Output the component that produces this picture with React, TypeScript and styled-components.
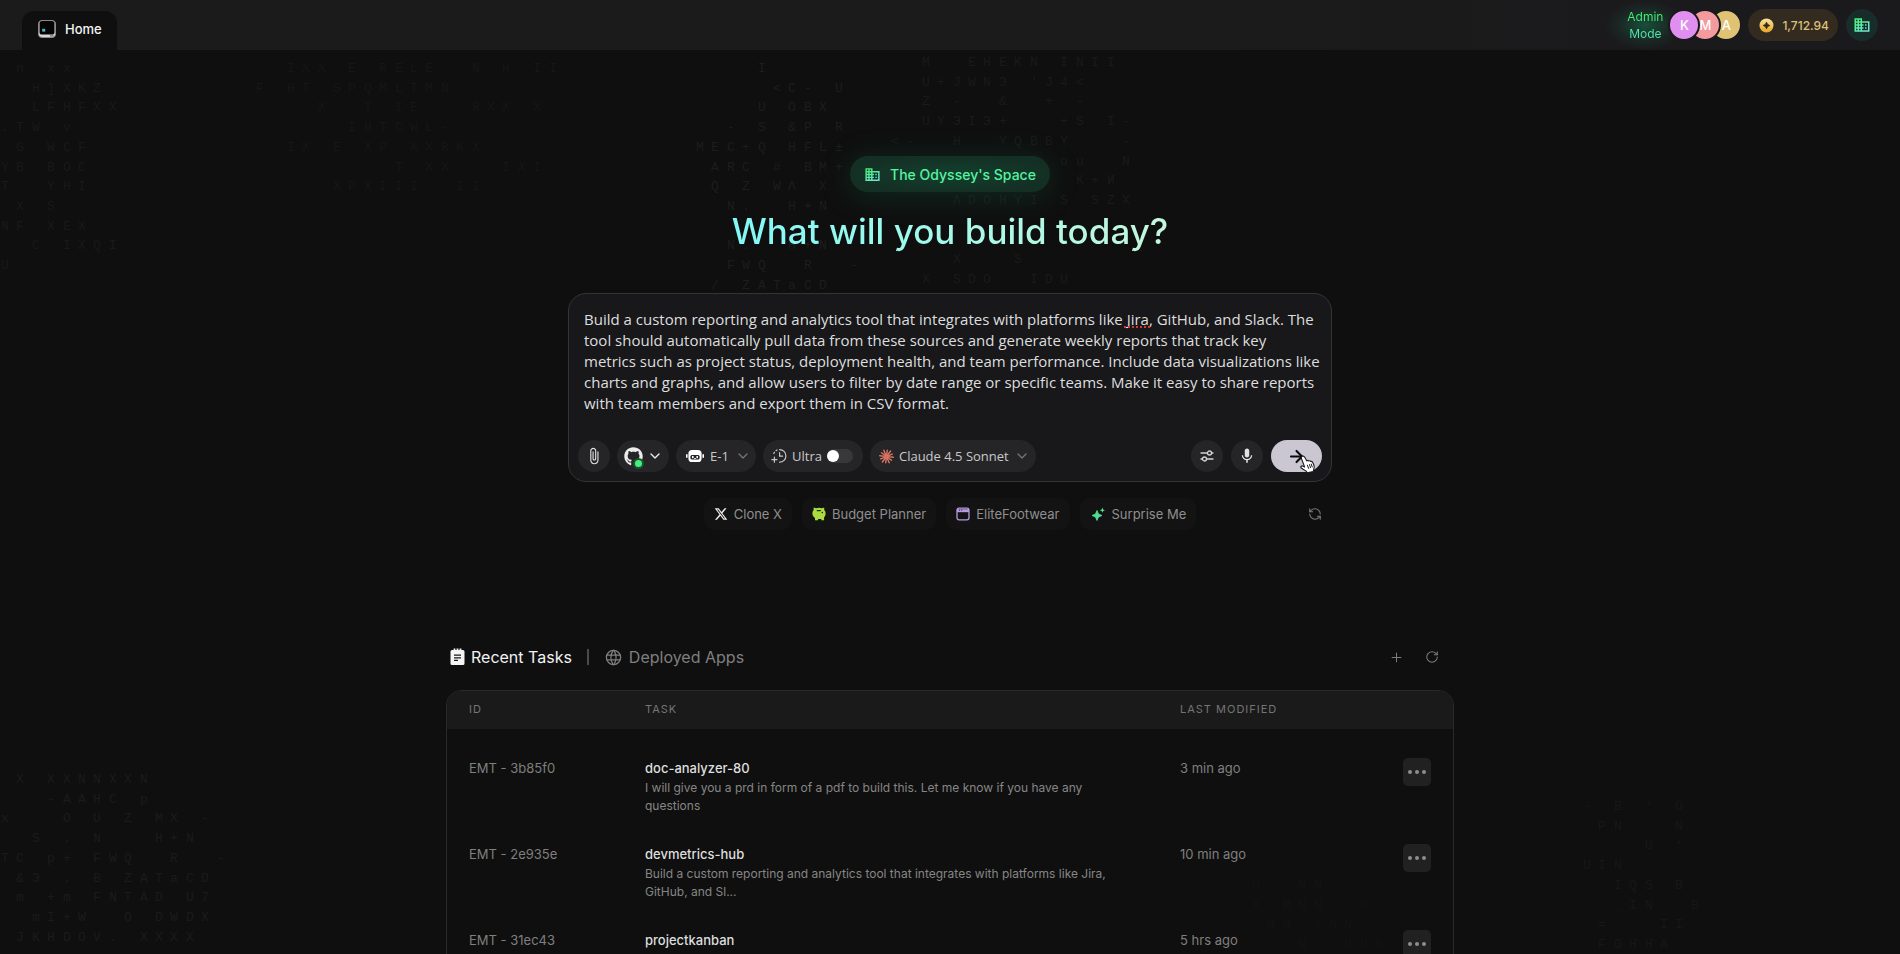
import React, { useId, useState } from 'react';
import styled, { createGlobalStyle, css } from 'styled-components';
import { ArrowRight, ChevronDown, Plus, RefreshCcw, RotateCw } from 'lucide-react';
import { FaGithub, FaXTwitter } from 'react-icons/fa6';
import { MdMic, MdAttachFile } from 'react-icons/md';
import { TbWorld } from 'react-icons/tb';

const sans = `Inter, 'Liberation Sans', sans-serif`;
const humanist = `'Open Sans', 'Liberation Sans', sans-serif`;

const GlobalStyle = createGlobalStyle`
  *, *::before, *::after { box-sizing: border-box; }
  body { margin: 0; background: #0f0f0f; color: #e4e4e4; font-family: ${sans}; }
  button, select, textarea, input { font: inherit; color: inherit; margin: 0; }
  button { cursor: pointer; }
  svg { display: block; flex: none; }
`;

/* ---------- page frame ---------- */

const Page = styled.div`
  position: relative;
  display: flex;
  flex-direction: column;
  height: 100vh;
  overflow: hidden;
  background: #0f0f0f;
`;

const Header = styled.header`
  position: relative;
  z-index: 1;
  display: flex;
  flex: none;
  align-items: flex-end;
  justify-content: space-between;
  height: 50px;
  padding: 0 22px;
  background: linear-gradient(90deg, #1b1b1b 60%, #1a191c);
`;

const HomeTab = styled.a`
  display: flex;
  align-items: center;
  gap: 9px;
  height: 39px;
  padding: 0 15px 4px 16px;
  border-radius: 12px 12px 0 0;
  background: #0f0f0f;
  color: #f4f4f4;
  font-size: 13px;
  font-weight: 500;
  text-decoration: none;
`;

const Account = styled.div`
  display: flex;
  align-items: center;
  gap: 8px;
  height: 50px;
`;

const AdminMode = styled.div`
  width: 44px;
  font-size: 12px;
  line-height: 17px;
  text-align: center;
  color: transparent;
  background: linear-gradient(#46ee6e 25%, #54e8b0 80%);
  background-clip: text;
`;

const AdminGlow = styled.div`
  margin-right: -25px;
  padding: 8px 18px;
  background: radial-gradient(ellipse closest-side, rgba(20, 200, 130, 0.3), rgba(20, 200, 130, 0.08) 65%, rgba(20, 200, 130, 0));
`;

const Avatars = styled.ul`
  position: relative;
  display: flex;
  margin: 0 -2px 0 0;
  padding: 0;
  list-style: none;
`;

const Avatar = styled.li<{ $tone: string; $order: number }>`
  position: relative;
  z-index: ${(p) => p.$order};
  display: flex;
  align-items: center;
  justify-content: center;
  width: 32px;
  height: 32px;
  border: 2px solid #1a191c;
  border-radius: 50%;
  background: ${(p) => p.$tone};
  color: #fff;
  font-size: 13px;
  font-weight: 500;
  & + & {
    margin-left: -11px;
  }
`;

const Credits = styled.button`
  display: flex;
  align-items: center;
  gap: 8px;
  height: 32px;
  padding: 0 9px 0 11px;
  border: 0;
  border-radius: 16px;
  background: #342b20;
  color: #dcc079;
  font-size: 12px;
  font-weight: 500;
`;

const SpaceButton = styled.button`
  display: flex;
  align-items: center;
  justify-content: center;
  width: 32px;
  height: 32px;
  padding: 0;
  border: 0;
  border-radius: 50%;
  background: #182d29;
`;

const Main = styled.main`
  position: relative;
  z-index: 1;
  display: flex;
  flex: 1;
  flex-direction: column;
  align-items: center;
  min-height: 0;
  overflow-y: auto;
  scrollbar-width: none;
`;

/* ---------- hero ---------- */

const Hero = styled.section`
  display: flex;
  flex: none;
  flex-direction: column;
  align-items: center;
  width: 100%;
  max-width: 764px;
  padding-top: 106px;
`;

const SpaceBadge = styled.div`
  display: flex;
  align-items: center;
  gap: 9px;
  height: 36px;
  padding: 0 14px;
  border-radius: 18px;
  background: radial-gradient(ellipse at center, #12402e, #143024 70%);
  box-shadow: 0 4px 32px rgba(20, 140, 90, 0.22);
  font-size: 14px;
  font-weight: 500;
  color: #55f4a0;
`;

const Title = styled.h1`
  margin: 17px 0 0;
  font-size: 35px;
  font-weight: 500;
  line-height: 44px;
  color: transparent;
  background: linear-gradient(90deg, #82f8f6, #a6f9ea 50%, #c4f7dc);
  background-clip: text;
`;

const Prompt = styled.form`
  width: 100%;
  margin-top: 40px;
  padding: 15px 5px 9px 9px;
  border: 1px solid #343436;
  border-radius: 18px;
  background: #18181a;
`;

const PromptText = styled.div`
  position: relative;
  padding-left: 6px;
`;

const PromptInput = styled.textarea`
  display: block;
  width: 100%;
  padding: 0;
  border: 0;
  outline: 0;
  resize: none;
  overflow: hidden;
  background: none;
  color: #dededf;
  font-family: ${humanist};
  font-size: 15px;
  line-height: 21px;
`;

const SpellingMark = styled.span`
  position: absolute;
  top: 17px;
  left: 546px;
  width: 26px;
  border-bottom: 2px dotted #d8353c;
`;

const Toolbar = styled.div`
  display: flex;
  align-items: center;
  gap: 7px;
  margin-top: 26px;
  padding-right: 4px;
`;

const pill = css`
  display: flex;
  align-items: center;
  height: 32px;
  border: 0;
  border-radius: 16px;
  background: #252527;
  color: #c9c9cb;
  font-family: ${humanist};
  font-size: 13px;
`;

const RoundButton = styled.button`
  ${pill}
  justify-content: center;
  width: 32px;
  padding: 0;
  color: #e2e2e4;
`;

const RepoButton = styled.button`
  ${pill}
  gap: 4px;
  padding: 0 6px 0 7px;
  color: #ececec;
`;

const RepoMark = styled.span`
  position: relative;
`;

const OnlineDot = styled.span`
  position: absolute;
  right: -1px;
  bottom: -3px;
  width: 11px;
  height: 11px;
  border: 2px solid #1b5131;
  border-radius: 50%;
  background: #45f07c;
`;

const PillLabel = styled.label<{ $gap: number; $start: number; $end: number }>`
  ${pill}
  gap: ${(p) => p.$gap}px;
  padding: 0 ${(p) => p.$end}px 0 ${(p) => p.$start}px;
  & > svg:last-child {
    color: #77777a;
  }
`;

const BareSelect = styled.select`
  padding: 0;
  border: 0;
  outline: 0;
  appearance: none;
  background: none;
`;

const Switch = styled.input`
  appearance: none;
  display: flex;
  align-items: center;
  width: 26px;
  height: 14px;
  border-radius: 7px;
  background: #38383a;
  &::before {
    content: '';
    width: 12px;
    height: 12px;
    border-radius: 50%;
    background: #fff;
  }
  &:checked {
    justify-content: flex-end;
    background: #2f8f57;
  }
`;

const ToolbarEnd = styled.div`
  display: flex;
  gap: 8px;
  margin-left: auto;
`;

const SendButton = styled.button`
  ${pill}
  position: relative;
  justify-content: center;
  width: 51px;
  padding: 0;
  background: #cac7d2;
  color: #0a0a0c;
`;

const Pointer = styled.svg`
  position: absolute;
  top: 15px;
  left: 28px;
`;

const Suggestions = styled.div`
  display: grid;
  grid-template-columns: 1fr auto 1fr;
  align-items: center;
  width: 100%;
  margin-top: 16px;
`;

const Chips = styled.div`
  display: flex;
  grid-column: 2;
  gap: 10px;
`;

const Chip = styled.button`
  display: flex;
  align-items: center;
  gap: 6px;
  height: 32px;
  padding: 0 10px;
  border: 0;
  border-radius: 10px;
  background: #131313;
  color: #8f8f8f;
  font-size: 13px;
`;

const GhostButton = styled.button`
  display: flex;
  align-items: center;
  justify-content: center;
  width: 30px;
  height: 30px;
  padding: 0;
  border: 0;
  background: none;
  color: #7c7c7c;
`;

const Shuffle = styled(GhostButton)`
  justify-self: end;
  margin-right: 2px;
`;

/* ---------- tasks ---------- */

const Tasks = styled.section`
  flex: none;
  width: 100%;
  max-width: 1008px;
  margin-top: 111px;
`;

const TasksBar = styled.div`
  display: flex;
  align-items: center;
  justify-content: space-between;
  height: 32px;
  padding: 0 7px 0 4px;
`;

const Tabs = styled.div`
  display: flex;
  align-items: center;
  gap: 15px;
`;

const Tab = styled.button`
  display: flex;
  align-items: center;
  gap: 6px;
  padding: 0;
  border: 0;
  background: none;
  color: #7f7f80;
  font-size: 16px;
  line-height: 20px;
  &[aria-selected='true'] {
    color: #f2f2f2;
  }
`;

const TabDivider = styled.span`
  width: 2px;
  height: 16px;
  background: #4a4a4a;
`;

const TasksActions = styled.div`
  display: flex;
  gap: 6px;
`;

const TableFrame = styled.div`
  margin-top: 17px;
  border: 1px solid #292929;
  border-radius: 15px;
  overflow: hidden;
`;

const Table = styled.table`
  width: 100%;
  border-collapse: collapse;
  table-layout: fixed;
  tbody::before {
    content: '';
    display: block;
    height: 15px;
  }
`;

const HeadCell = styled.th`
  height: 38px;
  padding: 0 0 2px;
  background: #1a1a1a;
  color: #757575;
  font-size: 11px;
  font-weight: 400;
  letter-spacing: 1px;
  text-align: left;
  &:first-child {
    padding-left: 22px;
  }
`;

const Row = styled.tr`
  height: 86px;
`;

const Cell = styled.td`
  padding: 14px 0 0;
  vertical-align: top;
  color: #7f7f7f;
  font-size: 13px;
  line-height: 20px;
  &:first-child {
    padding-left: 22px;
  }
`;

const TaskName = styled.div`
  color: #dedede;
  font-weight: 500;
`;

const TaskSummary = styled.p`
  max-width: 464px;
  margin: 1px 0 0;
  color: #868686;
  font-size: 12px;
  line-height: 18px;
`;

const MoreButton = styled.button`
  display: flex;
  align-items: center;
  justify-content: center;
  width: 28px;
  height: 28px;
  margin-left: auto;
  margin-right: 22px;
  padding: 0;
  border: 0;
  border-radius: 5px;
  background: #212121;
  color: #8d8d8d;
`;

/* ---------- glyph backdrop ---------- */

const Backdrop = styled.svg`
  position: absolute;
  inset: 0;
  width: 100%;
  height: 100%;
  font-family: 'Liberation Mono', monospace;
  font-size: 13px;
  text-anchor: middle;
`;

type Field = { x: number; y: number; fill: string; rows: string[] };

const fields: Field[] = [
  {
    x: 5, y: 72, fill: '#191919',
    rows: [' n xx', '  H]XKZ', '  LFHFXX', '.TW v', ' G WCF', 'YB BOC', 'T  YHI', ' X S', 'NF XEX', '  C IXQI', 'U'],
  },
  {
    x: 260, y: 72, fill: '#161616',
    rows: ['  IXX E RELE  N H II', 'F HT SPQMLTMN', '    X  T IE   RXX X', '      IHTCWL-', '  IX E XP XXRKX', '         T XX   IXI', '     XPXIII  II'],
  },
  {
    x: 700, y: 72, fill: '#1d1d1d',
    rows: ['    I', '     <C- U', '    U OBX', '  - S &P R', 'MEC+Q HFL±', ' ARC # BM+', ' Q Z WΛ X', '  N.  H+N', '', '  N.  H+N', '  FWQ  R  -', ' / ZATaCD'],
  },
  {
    x: 895, y: 66, fill: '#1a1a1a',
    rows: ['  M  EHEKN INII', "  U+JWNЭ 'J4<", '  Z -  &  + -', '  UYЭIЭ+   +S I-', '<-  H  YQBBY   -', '           ou  N', '            K+И', '    ΛDOHYI S SZX', '', '', '    X   S', '  X SDO  IDU'],
  },
  {
    x: 5, y: 783, fill: '#1b1b1b',
    rows: [' X XXNNXXN', '   -AAHC p', 'x   O U Z MX -', '  S . N   H+N', 'TC p+ FWQ  R  -', ' &Э . B ZATaCD', ' m +m FNTAD U7', '  mI+W  O DWDX', ' JKHDOV. XXXX'],
  },
  {
    x: 1587, y: 810, fill: '#171717',
    rows: ["- B ' O", ' PN   N', '    U *', 'UIN', '  IQS B', '  _IN  B', ' =   II', ' FGHHA'],
  },
  { x: 1256, y: 889, fill: '#131313', rows: ['N  NN', 'X MNN  N', ' NN XNN', '   N  NNX'] },
];

const GlyphBackdrop = () => (
  <Backdrop aria-hidden="true">
    {fields.map((f) =>
      f.rows.map((row, r) => (
        <g key={`${f.x}-${r}`} fill={f.fill}>
          {[...row].map((ch, c) =>
            ch === ' ' ? null : (
              <text key={c} x={Math.round(f.x + c * 15.4)} y={Math.round(f.y + r * 19.7)}>
                {ch}
              </text>
            ),
          )}
        </g>
      )),
    )}
  </Backdrop>
);

/* ---------- icons ---------- */

const BuildingIcon = ({ size = 18 }: { size?: number }) => {
  const id = useId();
  return (
    <svg width={size} height={size} viewBox="0 0 24 24" aria-hidden="true">
      <defs>
        <linearGradient id={id} x1="0" y1="0" x2="0.7" y2="1">
          <stop offset="0" stopColor="#3ff06c" />
          <stop offset="1" stopColor="#6fe8d2" />
        </linearGradient>
      </defs>
      <path
        fill={`url(#${id})`}
        d="M12 7V3H2v18h20V7H12zM6 19H4v-2h2v2zm0-4H4v-2h2v2zm0-4H4V9h2v2zm0-4H4V5h2v2zm4 12H8v-2h2v2zm0-4H8v-2h2v2zm0-4H8V9h2v2zm0-4H8V5h2v2zm10 12h-8v-2h2v-2h-2v-2h2v-2h-2V9h8v10zm-2-8h-2v2h2v-2zm0 4h-2v2h2v-2z"
      />
    </svg>
  );
};

const AppMark = () => (
  <svg width="18" height="18" viewBox="0 0 18 18" aria-hidden="true">
    <rect x="0.5" y="0.5" width="17" height="17" rx="3.5" fill="#d8d8d8" stroke="#8a8a8a" />
    <rect x="1.5" y="1" width="15" height="13.6" rx="2.6" fill="#050505" />
    <rect x="4.2" y="8.8" width="3" height="2.8" fill="#4fb6c4" />
    <rect x="12" y="15.4" width="3.4" height="1" fill="#555" />
  </svg>
);

const CoinIcon = () => (
  <svg width="15" height="15" viewBox="0 0 15 15" aria-hidden="true">
    <defs>
      <linearGradient id="coin" x1="0" y1="0" x2="0" y2="1">
        <stop offset="0" stopColor="#f7e3a4" />
        <stop offset="1" stopColor="#e6a622" />
      </linearGradient>
    </defs>
    <circle cx="7.5" cy="7.5" r="7" fill="url(#coin)" />
    <path d="M7.5 4.2 8.6 6.4 10.8 7.5 8.6 8.6 7.5 10.8 6.4 8.6 4.2 7.5 6.4 6.4Z" fill="#33270c" stroke="#33270c" strokeWidth="0.8" />
  </svg>
);

const RobotIcon = () => (
  <svg width="18" height="14" viewBox="0 0 18 14" aria-hidden="true" fill="#fff">
    <rect x="0" y="5" width="1.6" height="4" rx="0.8" />
    <rect x="16.4" y="5" width="1.6" height="4" rx="0.8" />
    <rect x="2.4" y="1" width="13.2" height="12" rx="3.6" />
    <rect x="4.4" y="6" width="9.2" height="4.6" rx="1.6" fill="#252527" />
    <rect x="6" y="7" width="1.6" height="2.2" />
    <rect x="10.4" y="7" width="1.6" height="2.2" />
    <rect x="8.2" y="9" width="1.6" height="1" />
  </svg>
);

const UltraIcon = () => (
  <svg width="16" height="16" viewBox="0 0 16 16" aria-hidden="true" fill="none" stroke="#c6c6c8" strokeWidth="1.2" strokeLinecap="round">
    <path d="M8.6 1.6a6.2 6.2 0 0 1 0 12.6" />
    <path d="M2.8 5.4a6.2 6.2 0 0 1 4-3.6" strokeDasharray="1.2 2.2" />
    <path d="M8.6 4.6v3.6h3" />
    <path d="M3.4 9v5.2M0.8 11.6H6" />
  </svg>
);

const BurstIcon = () => (
  <svg width="15" height="15" viewBox="0 0 16 16" aria-hidden="true" stroke="#d97562" strokeWidth="1.5" strokeLinecap="round">
    {Array.from({ length: 12 }, (_, i) => {
      const a = (i * Math.PI) / 6 + 0.12;
      const r = i % 2 ? 6.7 : 7.3;
      return <line key={i} x1={8 + Math.cos(a)} y1={8 + Math.sin(a)} x2={8 + r * Math.cos(a)} y2={8 + r * Math.sin(a)} />;
    })}
  </svg>
);

const TuneIcon = () => (
  <svg width="14" height="14" viewBox="0 0 14 14" aria-hidden="true" fill="none" stroke="#d2d2d4" strokeWidth="1.3" strokeLinecap="round">
    <path d="M1 4h6.4M11.6 4H13M1 10h1.4M6.6 10H13" />
    <circle cx="9.5" cy="4" r="2" />
    <circle cx="4.5" cy="10" r="2" />
  </svg>
);

const HandPointer = () => (
  <Pointer width="17" height="19" viewBox="0 0 17 19" aria-hidden="true">
    <path
      d="M3.3 1.3c.9-.5 1.8-.1 2.3.8l2.1 3.7c.6-.5 1.5-.4 2 .2.7-.4 1.5-.2 2 .5.8-.3 1.5 0 1.9.7l1.2 2.5c.8 1.8.6 3.1-.1 4.7l-.4 2.2-6.2 1.1-1-1.6-4.5-2.9c-.9-.6-1-1.3-.6-1.8.5-.6 1.3-.7 2.2-.2l1.4.7L2.5 3.7c-.5-.9-.1-1.9.8-2.4Z"
      fill="#fff"
      stroke="#1a1a1a"
      strokeWidth="1.1"
      strokeLinejoin="round"
    />
    <path d="M8.4 10.2l1.2 3.2M10.5 9.6l1 3M12.3 9.1l.9 2.9" stroke="#1a1a1a" strokeWidth="1" strokeLinecap="round" />
  </Pointer>
);

const PigIcon = () => (
  <svg width="14" height="14" viewBox="0 0 14 14" aria-hidden="true">
    <path
      d="M1.4.8C2.7.4 3.5.8 4 1.3c1.9-.7 4.2-.7 6 0 .6-.6 1.5-.8 2.400-.4l-.3 1.900c.9.9 1.400 2 1.500 3.200.1 1.700-.4 3.200-1.500 4.300v2.900H9.300v-1.300H6.100v1.300H3V10.900C1.300 9.900.4 8.400.4 6.500c0-1.500.5-2.800 1.400-3.700Z"
      fill="#a9dc3f"
    />
    <rect x="4.6" y="2.9" width="4.4" height="1.3" rx="0.6" fill="#1d2a08" />
    <circle cx="10.3" cy="5.6" r="0.8" fill="#1d2a08" />
  </svg>
);

const WindowIcon = () => (
  <svg width="14" height="14" viewBox="0 0 14 14" aria-hidden="true" fill="none" stroke="#b59be0">
    <rect x="1" y="1.2" width="12" height="11.6" rx="2" strokeWidth="1.3" />
    <path d="M1 2.2h12v3H1z" fill="#b59be0" stroke="none" />
    <path d="M3 3.2h1M5.2 3.2h1" stroke="#3a2a5a" strokeWidth="1" />
  </svg>
);

const SparkIcon = () => (
  <svg width="16" height="14" viewBox="0 0 16 14" aria-hidden="true">
    <defs>
      <linearGradient id="spark" x1="0" y1="0" x2="1" y2="1">
        <stop offset="0" stopColor="#3fe874" />
        <stop offset="1" stopColor="#64d0b4" />
      </linearGradient>
    </defs>
    <path d="M7 3.5 8.5 7 12 8.5 8.5 10 7 13.5 5.5 10 2 8.5 5.5 7Z" fill="url(#spark)" stroke="url(#spark)" strokeWidth="0.8" strokeLinejoin="round" />
    <path d="M12.4.6 13.1 2.5 15 3.2 13.1 3.9 12.4 5.8 11.7 3.9 9.8 3.2 11.7 2.5Z" fill="#4be886" />
  </svg>
);

const ClipboardIcon = () => (
  <svg width="15" height="18" viewBox="0 0 15 18" aria-hidden="true">
    <path d="M2 2h1.6V.6h1.8V2h1.2V.6h1.8V2h1.2V.6h1.8V2H13a1.5 1.5 0 0 1 1.5 1.5v12A1.5 1.5 0 0 1 13 17H2a1.5 1.5 0 0 1-1.5-1.5v-12A1.5 1.5 0 0 1 2 2Z" fill="#f4f4f4" />
    <path d="M4 7.2h7M4 9.8h7M4 12.4h4" stroke="#151515" strokeWidth="1.3" />
  </svg>
);

const MoreIcon = () => (
  <svg width="18" height="4" viewBox="0 0 18 4" aria-hidden="true" fill="currentColor">
    <circle cx="2" cy="2" r="2" />
    <circle cx="9" cy="2" r="2" />
    <circle cx="16" cy="2" r="2" />
  </svg>
);

/* ---------- data ---------- */

const promptText = [
  'Build a custom reporting and analytics tool that integrates with platforms like Jira, GitHub, and Slack. The tool should automatically pull data from these sources and generate weekly reports that track key',
  'metrics such as project status, deployment health, and team performance. Include data visualizations like charts and graphs, and allow users to filter by date range or specific teams. Make it easy to share reports with team members and export them in CSV format.',
].join('\n');

const people = [
  { initial: 'K', tone: '#e08ff0' },
  { initial: 'M', tone: '#f29a9e' },
  { initial: 'A', tone: '#dfc274' },
];

const chips = [
  { label: 'Clone X', icon: <FaXTwitter size={14} color="#f0f0f0" /> },
  { label: 'Budget Planner', icon: <PigIcon /> },
  { label: 'EliteFootwear', icon: <WindowIcon /> },
  { label: 'Surprise Me', icon: <SparkIcon /> },
];

const tasks = [
  {
    id: 'EMT - 3b85f0',
    name: 'doc-analyzer-80',
    summary: 'I will give you a prd in form of a pdf to build this. Let me know if you have any questions',
    modified: '3 min ago',
  },
  {
    id: 'EMT - 2e935e',
    name: 'devmetrics-hub',
    summary: 'Build a custom reporting and analytics tool that integrates with platforms like Jira, GitHub, and Sl...',
    modified: '10 min ago',
  },
  { id: 'EMT - 31ec43', name: 'projectkanban', summary: '', modified: '5 hrs ago' },
];

export default function App() {
  const [prompt, setPrompt] = useState(promptText);
  const [tab, setTab] = useState('recent');

  return (
    <Page>
      <GlobalStyle />
      <GlyphBackdrop />
      <Header>
        <HomeTab href="#home">
          <AppMark />
          Home
        </HomeTab>
        <Account>
          <AdminGlow>
            <AdminMode>Admin Mode</AdminMode>
          </AdminGlow>
          <Avatars>
            {people.map((p, i) => (
              <Avatar key={p.initial} $tone={p.tone} $order={people.length - i}>
                {p.initial}
              </Avatar>
            ))}
          </Avatars>
          <Credits type="button">
            <CoinIcon />
            1,712.94
          </Credits>
          <SpaceButton type="button" aria-label="Workspace">
            <BuildingIcon />
          </SpaceButton>
        </Account>
      </Header>

      <Main>
        <Hero>
          <SpaceBadge>
            <BuildingIcon size={17} />
            The Odyssey's Space
          </SpaceBadge>
          <Title>What will you build today?</Title>

          <Prompt onSubmit={(e) => e.preventDefault()}>
            <PromptText>
              <PromptInput aria-label="Describe your app" rows={5} spellCheck={false} value={prompt} onChange={(e) => setPrompt(e.target.value)} />
              {prompt === promptText && <SpellingMark />}
            </PromptText>
            <Toolbar>
              <RoundButton type="button" aria-label="Attach file">
                <MdAttachFile size={18} />
              </RoundButton>
              <RepoButton type="button" aria-label="GitHub repository" aria-haspopup="menu">
                <RepoMark>
                  <FaGithub size={19} />
                  <OnlineDot />
                </RepoMark>
                <ChevronDown size={16} strokeWidth={2} />
              </RepoButton>
              <PillLabel $gap={6} $start={10} $end={5}>
                <RobotIcon />
                <BareSelect aria-label="Agent">
                  <option>E-1</option>
                </BareSelect>
                <ChevronDown size={16} strokeWidth={1.8} />
              </PillLabel>
              <PillLabel $gap={5} $start={8} $end={10}>
                <UltraIcon />
                Ultra
                <Switch type="checkbox" role="switch" />
              </PillLabel>
              <PillLabel $gap={5} $start={9} $end={6}>
                <BurstIcon />
                <BareSelect aria-label="Model">
                  <option>Claude 4.5 Sonnet</option>
                </BareSelect>
                <ChevronDown size={16} strokeWidth={1.8} />
              </PillLabel>
              <ToolbarEnd>
                <RoundButton type="button" aria-label="Settings">
                  <TuneIcon />
                </RoundButton>
                <RoundButton type="button" aria-label="Dictate">
                  <MdMic size={18} />
                </RoundButton>
                <SendButton type="submit" aria-label="Send">
                  <ArrowRight size={19} strokeWidth={2.6} />
                  <HandPointer />
                </SendButton>
              </ToolbarEnd>
            </Toolbar>
          </Prompt>

          <Suggestions>
            <Chips>
              {chips.map((c) => (
                <Chip key={c.label} type="button">
                  {c.icon}
                  {c.label}
                </Chip>
              ))}
            </Chips>
            <Shuffle type="button" aria-label="Shuffle suggestions">
              <RefreshCcw size={14} strokeWidth={1.8} />
            </Shuffle>
          </Suggestions>
        </Hero>

        <Tasks>
          <TasksBar>
            <Tabs role="tablist">
              <Tab type="button" role="tab" aria-selected={tab === 'recent'} onClick={() => setTab('recent')}>
                <ClipboardIcon />
                Recent Tasks
              </Tab>
              <TabDivider />
              <Tab type="button" role="tab" aria-selected={tab === 'deployed'} onClick={() => setTab('deployed')}>
                <TbWorld size={19} strokeWidth={1.6} />
                Deployed Apps
              </Tab>
            </Tabs>
            <TasksActions>
              <GhostButton type="button" aria-label="New task">
                <Plus size={15} strokeWidth={1.6} />
              </GhostButton>
              <GhostButton type="button" aria-label="Refresh tasks">
                <RotateCw size={14} strokeWidth={1.8} />
              </GhostButton>
            </TasksActions>
          </TasksBar>

          <TableFrame>
            <Table>
              <colgroup>
                <col width="198" />
                <col />
                <col width="160" />
                <col width="113" />
              </colgroup>
              <thead>
                <tr>
                  <HeadCell scope="col">ID</HeadCell>
                  <HeadCell scope="col">TASK</HeadCell>
                  <HeadCell scope="col">LAST MODIFIED</HeadCell>
                  <HeadCell as="td" />
                </tr>
              </thead>
              <tbody>
                {tasks.map((t) => (
                  <Row key={t.id}>
                    <Cell>{t.id}</Cell>
                    <Cell>
                      <TaskName>{t.name}</TaskName>
                      {t.summary && <TaskSummary>{t.summary}</TaskSummary>}
                    </Cell>
                    <Cell>{t.modified}</Cell>
                    <Cell>
                      <MoreButton type="button" aria-label={`More actions for ${t.name}`}>
                        <MoreIcon />
                      </MoreButton>
                    </Cell>
                  </Row>
                ))}
              </tbody>
            </Table>
          </TableFrame>
        </Tasks>
      </Main>
    </Page>
  );
}
